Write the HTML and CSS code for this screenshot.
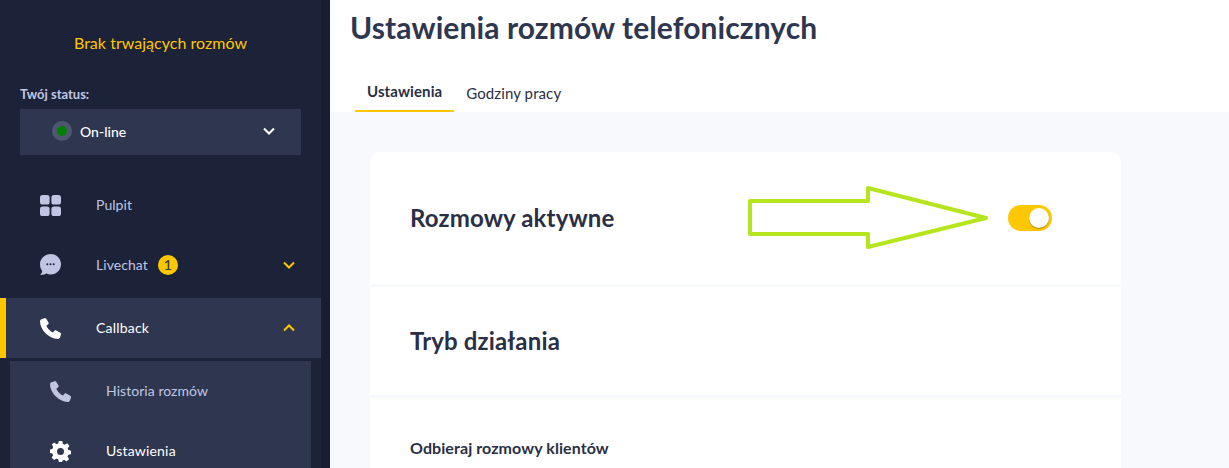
FILE: index.html
```html
<!DOCTYPE html>
<html lang="pl">
<head>
<meta charset="utf-8">
<title>Ustawienia rozmów telefonicznych</title>
<link rel="stylesheet" href="styles.css">
</head>
<body>
<div class="app">
  <aside class="sidebar">
    <div class="sidebar-inner">
      <p class="call-state">Brak trwających rozmów</p>
      <div class="status-label">Twój status:</div>
      <div class="status-box">
        <span class="status-dot"><span class="status-dot-core"></span></span>
        <span class="status-text">On-line</span>
        <svg class="chev-white" viewBox="0 0 12 8"><path d="M1 1.5 6 6.5 11 1.5" fill="none" stroke="currentColor" stroke-width="2"/></svg>
      </div>
      <nav class="nav">
        <a class="nav-item">
          <svg class="nav-icon" viewBox="0 0 21 21"><rect width="9.6" height="9.6" rx="2.6"/><rect x="11.4" width="9.6" height="9.6" rx="2.6"/><rect y="11.4" width="9.6" height="9.6" rx="2.6"/><rect x="11.4" y="11.4" width="9.6" height="9.6" rx="2.6"/></svg>
          <span class="nav-text">Pulpit</span>
        </a>
        <a class="nav-item nav-item-chat">
          <svg class="nav-icon" viewBox="0 0 21 21"><path d="M10.8 0C16.5 0 21 4.500 21 10.200S16.500 20.500 10.800 20.500c-1.500 0-3-.3-4.300-.9-1.300.8-3.700 1.400-6.300 1.300 1.100-1 1.800-2.300 2-3.900C.8 15.200 0 12.800 0 10.200 0 4.500 5 0 10.800 0Z"/><g fill="#1c2238"><circle cx="7.300" cy="10.300" r="1"/><circle cx="10.500" cy="10.300" r="1"/><circle cx="13.700" cy="10.300" r="1"/></g></svg>
          <span class="nav-text">Livechat</span>
          <span class="badge">1</span>
          <svg class="chev-yellow" viewBox="0 0 12 8"><path d="M1 1.500 6 6.500 11 1.500" fill="none" stroke="currentColor" stroke-width="2"/></svg>
        </a>
        <a class="nav-item nav-item-open">
          <svg class="nav-icon icon-white" viewBox="0 0 21 21"><path d="M4.600.2 1.500 1.300C.500 1.700 0 2.500 0 3.500 .3 11.800 8.800 20.800 17.700 21c1 0 1.900-.6 2.300-1.500l1-3c.2-.7-.1-1.300-.7-1.700l-4.100-2.300c-.6-.3-1.200-.2-1.700.3l-1.500 1.700c-2.500-1.100-5.700-4.300-6.600-6.800l1.800-1.500c.5-.4.600-1.100.3-1.700L6.200.7C5.800.2 5.200 0 4.600.2Z"/></svg>
          <span class="nav-text text-white">Callback</span>
          <svg class="chev-yellow" viewBox="0 0 12 8"><path d="M1 6.500 6 1.500 11 6.500" fill="none" stroke="currentColor" stroke-width="2"/></svg>
        </a>
        <div class="subnav">
          <a class="sub-item">
            <svg class="nav-icon" viewBox="0 0 21 21"><path d="M4.600.2 1.500 1.300C.500 1.700 0 2.500 0 3.500 .3 11.800 8.800 20.800 17.700 21c1 0 1.900-.6 2.300-1.500l1-3c.2-.7-.1-1.300-.7-1.700l-4.100-2.300c-.6-.3-1.200-.2-1.700.3l-1.500 1.700c-2.500-1.100-5.700-4.300-6.600-6.800l1.800-1.500c.5-.4.600-1.100.3-1.700L6.200.7C5.800.2 5.200 0 4.600.2Z"/></svg>
            <span class="nav-text">Historia rozmów</span>
          </a>
          <a class="sub-item">
            <svg class="nav-icon icon-white" viewBox="0 0 21 21"><path fill-rule="evenodd" d="M8.700 0h3.600l.5 2.800c.7.200 1.300.5 1.900.9l2.500-1.400 2.300 2.600-1.800 2.300c.3.600.5 1.200.6 1.800l2.700.7v3.500l-2.800.5c-.2.700-.4 1.300-.8 1.800l1.700 2.400-2.500 2.500-2.400-1.700c-.6.300-1.200.6-1.800.7L12.200 21H8.800l-.5-2.700c-.7-.2-1.300-.4-1.900-.8l-2.300 1.600-2.500-2.500 1.600-2.300c-.4-.6-.6-1.200-.8-1.900L0 12V8.600l2.400-.7c.2-.7.400-1.300.8-1.900L1.800 3.600l2.500-2.100 2.200 1.800c.6-.4 1.200-.6 1.800-.8ZM10.500 7a3.500 3.500 0 1 0 0 7 3.500 3.500 0 0 0 0-7Z"/></svg>
            <span class="nav-text text-white">Ustawienia</span>
          </a>
        </div>
      </nav>
    </div>
    <div class="sidebar-track"></div>
  </aside>
  <main class="main">
    <header class="page-head">
      <h1 class="page-title">Ustawienia rozmów telefonicznych</h1>
      <div class="tabs">
        <a class="tab tab-active">Ustawienia</a>
        <a class="tab">Godziny pracy</a>
      </div>
    </header>
    <div class="content">
      <section class="card">
        <div class="row row-active">
          <h2 class="row-title">Rozmowy aktywne</h2>
          <span class="toggle"><span class="knob"></span></span>
          <svg class="arrow" viewBox="0 0 250 70"><path d="M2 16H120V3L238 33 120 62V49H2Z" fill="none" stroke="#b5e61d" stroke-width="4" stroke-linejoin="round"/></svg>
        </div>
        <div class="row row-mode">
          <h2 class="row-title">Tryb działania</h2>
        </div>
        <div class="row row-last">
          <h3 class="row-sub">Odbieraj rozmowy klientów</h3>
        </div>
      </section>
    </div>
  </main>
</div>
</body>
</html>
```

FILE: styles.css
```css
* { box-sizing: border-box; }
html, body { margin: 0; height: 100%; overflow: hidden; }
body { font-family: Lato, "Liberation Sans", sans-serif; background: #fff; }
h1, h2, h3, p { margin: 0; }

.app { display: flex; height: 468px; overflow: hidden; }

.sidebar { display: flex; width: 330px; flex: none; background: #1c2238; }
.sidebar-inner { width: 321px; flex: none; }
.sidebar-track { width: 9px; flex: none; background: #181d30; }

.call-state { padding-top: 34px; height: 86px; text-align: center; font-size: 16px; line-height: 18px; letter-spacing: .03px; color: #ffc700; }
.status-label { height: 23px; padding-left: 20px; font-size: 13px; line-height: 16px; font-weight: 700; color: #c0c6e2; }
.status-box { display: flex; align-items: center; height: 46px; margin: 0 20px; padding: 0 26px 2px 32px; background: #2f3650; }
.status-dot { display: flex; align-items: center; justify-content: center; width: 20px; height: 20px; border-radius: 50%; background: #4f5670; }
.status-dot-core { width: 10px; height: 10px; border-radius: 50%; background: #008000; }
.status-text { margin-left: 8px; flex: 1; font-size: 14px; font-weight: 500; color: #fff; }
.chev-white { width: 12px; height: 8px; color: #fff; }

.nav { padding-top: 20px; }
.nav-item { display: flex; align-items: center; height: 60px; padding-left: 40px; padding-right: 26px; }
.nav-icon { width: 21px; height: 21px; flex: none; fill: #c0c6e2; }
.icon-white { fill: #fff; }
.nav-text { margin-left: 35px; font-size: 14px; line-height: 20px; letter-spacing: .05px; color: #c0c6e2; }
.text-white { color: #fff; letter-spacing: .2px; }
.badge { display: flex; align-items: center; justify-content: center; width: 20px; height: 20px; margin-left: 10px; border-radius: 50%; background: #ffc700; color: #2f3650; font-size: 14px; font-weight: 500; }
.chev-yellow { width: 12px; height: 8px; margin-left: auto; color: #ffc700; }
.nav-item-chat { height: 63px; padding-bottom: 4px; }
.nav-item-open { padding-left: 34px; background: #2f3650; border-left: 6px solid #ffc700; }
.subnav { margin: 3px 10px 0; background: #2f3650; }
.sub-item { display: flex; align-items: center; height: 60px; padding-left: 40px; }

.main { flex: 1; min-width: 0; display: flex; flex-direction: column; background: #f8f9fd; }
.page-head { height: 112px; flex: none; padding-left: 20px; background: #fff; }
.page-title { padding-top: 9px; height: 70px; font-size: 30px; line-height: 36px; font-weight: 700; letter-spacing: .1px; color: #2f3650; }
.tabs { display: flex; padding-left: 5px; }
.tab { display: block; height: 42px; padding: 14px 12px 0; font-size: 15px; line-height: 18px; letter-spacing: .1px; color: #2b2f45; }
.tab-active { font-weight: 700; border-bottom: 2px solid #ffc700; padding-top: 12px; }

.content { padding: 40px 108px 0 40px; }
.card { border-radius: 10px; background: #fff; }
.row { position: relative; display: flex; align-items: center; padding: 0 40px; border-bottom: 3px solid #f8f9fd; }
.row-active { height: 135px; justify-content: space-between; padding-right: 69px; }
.row-mode { height: 111px; }
.row-last { height: 110px; border-bottom: 0; }
.row-title { font-size: 24px; line-height: 30px; font-weight: 700; letter-spacing: .15px; color: #2b2f45; }
.row-sub { font-size: 16px; font-weight: 700; letter-spacing: .08px; color: #2b2f45; padding-bottom: 12px; }
.toggle { position: relative; display: block; width: 44px; height: 26px; border-radius: 13px; background: #ffc700; }
.knob { position: absolute; top: 3px; right: 3px; width: 20px; height: 20px; border-radius: 50%; background: #fff; box-shadow: 0 1px 1px rgba(90, 70, 0, .5); }
.arrow { position: absolute; left: 378px; top: 33px; width: 250px; height: 70px; }
```
